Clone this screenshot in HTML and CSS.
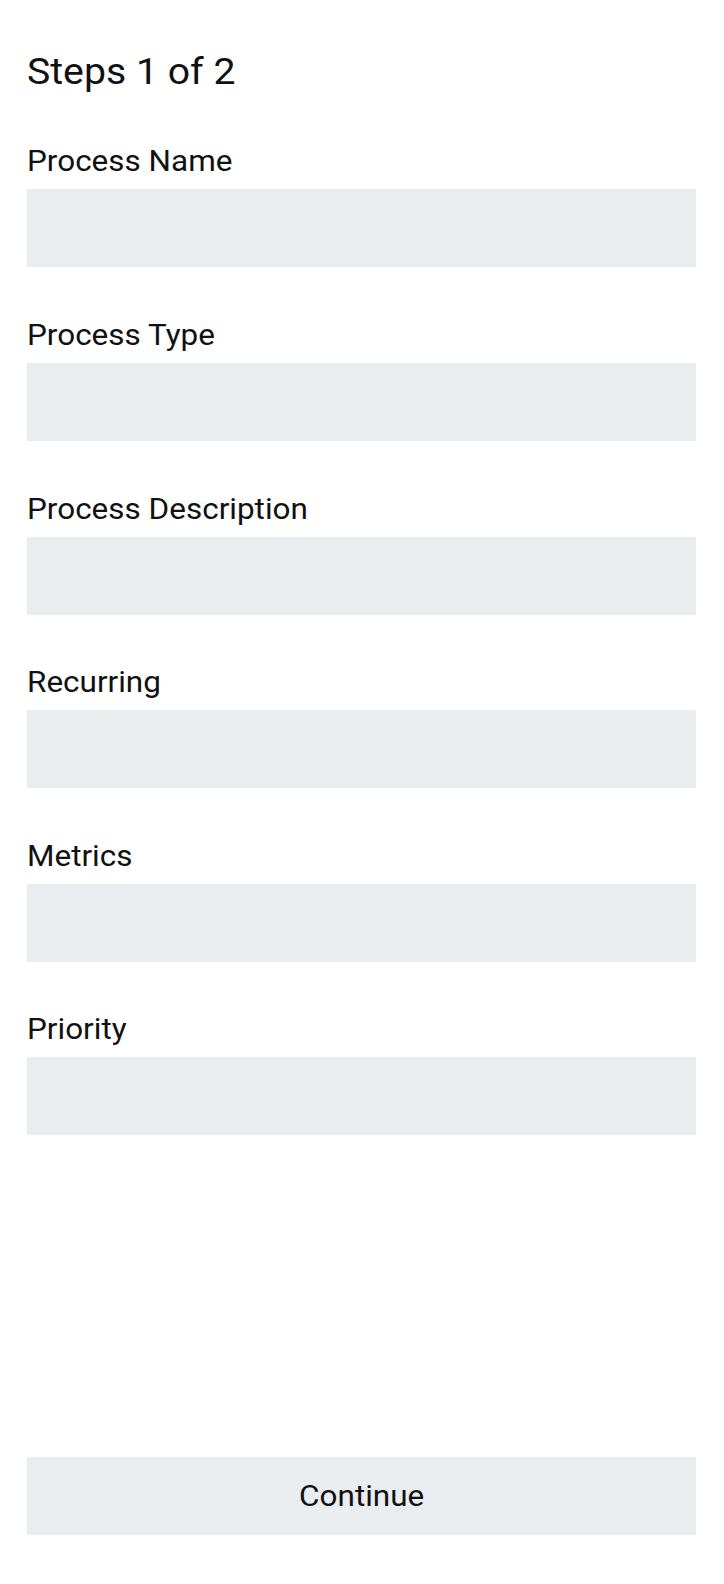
FILE: index.html
```html
<!DOCTYPE html>
<html lang="en">
<head>
<meta charset="utf-8">
<title>Steps 1 of 2</title>
<link rel="stylesheet" href="styles.css">
</head>
<body>
<main class="page">
  <h1 class="title"><span class="wide">Steps 1 of 2</span></h1>
  <form class="form">
    <div class="field">
      <label class="label"><span class="wide">Process Name</span></label>
      <div class="input"></div>
    </div>
    <div class="field">
      <label class="label"><span class="wide">Process Type</span></label>
      <div class="input"></div>
    </div>
    <div class="field">
      <label class="label"><span class="wide">Process Description</span></label>
      <div class="input"></div>
    </div>
    <div class="field">
      <label class="label"><span class="wide">Recurring</span></label>
      <div class="input"></div>
    </div>
    <div class="field">
      <label class="label"><span class="wide">Metrics</span></label>
      <div class="input"></div>
    </div>
    <div class="field">
      <label class="label"><span class="wide">Priority</span></label>
      <div class="input"></div>
    </div>
  </form>
  <div class="button"><span class="wide center">Continue</span></div>
</main>
</body>
</html>
```

FILE: styles.css
```css
* { box-sizing: border-box; }
html, body { margin: 0; padding: 0; background: #ffffff; }
body {
  font-family: Roboto, "Noto Sans", sans-serif;
  color: #111111;
}
.page {
  min-height: 1584px;
  display: flex;
  flex-direction: column;
  padding: 51px 28px 49px 27px;
}
.wide {
  display: inline-block;
  transform: scaleX(1.085);
  transform-origin: left center;
}
.wide.center {
  transform-origin: center center;
}
.title {
  margin: 0;
  font-size: 37px;
  font-weight: 400;
  line-height: 42px;
}
.title .wide {
  transform: scaleX(1.06);
}
.form {
  display: flex;
  flex-direction: column;
  gap: 51.6px;
  margin-top: 52.4px;
}
.field {
  display: flex;
  flex-direction: column;
  gap: 11px;
}
.label {
  font-size: 29px;
  line-height: 33px;
}
.input {
  height: 78px;
  background: #e9edf0;
}
.button {
  margin-top: auto;
  height: 78px;
  background: #e9edf0;
  display: flex;
  align-items: center;
  justify-content: center;
  font-size: 29px;
}
```
